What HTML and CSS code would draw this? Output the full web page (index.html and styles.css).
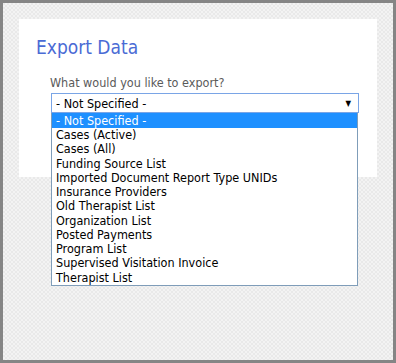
FILE: index.html
```html
<!DOCTYPE html>
<html lang="en">
<head>
    <meta charset="UTF-8">
    <meta name="viewport" content="width=device-width, initial-scale=1.0">
    <title>Export Data</title>
    <link rel="stylesheet" href="styles.css">
</head>
<body>
    <div class="frame">
        <div class="panel">
            <h1>Export Data</h1>
            <div class="field">
                <label>What would you like to export?</label>
                <div class="picker">
                    <div class="picker-box">
                        <span>- Not Specified -</span>
                        <span class="arrow">&#9660;</span>
                    </div>
                    <ul class="picker-list">
                        <li class="selected">- Not Specified -</li>
                        <li>Cases (Active)</li>
                        <li>Cases (All)</li>
                        <li>Funding Source List</li>
                        <li>Imported Document Report Type UNIDs</li>
                        <li>Insurance Providers</li>
                        <li>Old Therapist List</li>
                        <li>Organization List</li>
                        <li>Posted Payments</li>
                        <li>Program List</li>
                        <li>Supervised Visitation Invoice</li>
                        <li>Therapist List</li>
                    </ul>
                </div>
            </div>
        </div>
    </div>
</body>
</html>
```

FILE: styles.css
```css
body {
    margin: 0;
    font-family: "DejaVu Sans Condensed", "DejaVu Sans", sans-serif;
}
.frame {
    height: 363px;
    box-sizing: border-box;
    border: 3px solid #858585;
    padding: 16px 16px 0 16px;
    background-color: #efefef;
    background-image: repeating-conic-gradient(#f3f3f3 0 25%, #e9e9e9 0 50%);
    background-size: 4px 4px;
}
.panel {
    background-color: #fff;
    height: 158px;
    padding: 17px 17px 0 17px;
    box-sizing: border-box;
}
h1 {
    margin: 0;
    font-size: 19px;
    font-weight: normal;
    color: #4a6bd5;
    line-height: 22px;
}
.field {
    margin: 18px 0 0 15px;
}
label {
    display: block;
    font-size: 12.5px;
    color: #5a5a5a;
    line-height: 14px;
    margin: 0 0 3px -1px;
}
.picker {
    position: relative;
    width: 308px;
    font-size: 12.5px;
}
.picker-box {
    display: flex;
    justify-content: space-between;
    align-items: center;
    height: 20px;
    box-sizing: border-box;
    border: 1px solid #7aa5e6;
    padding: 0 7px 0 4px;
    color: #000;
}
.arrow {
    font-size: 8px;
}
.picker-list {
    position: absolute;
    top: 20px;
    left: 0;
    width: 307px;
    box-sizing: border-box;
    margin: 0;
    padding: 0;
    list-style: none;
    background-color: #fff;
    border: 1px solid #7f9db9;
    border-top: none;
}
.picker-list li {
    line-height: 14.25px;
    padding-left: 4px;
    color: #000;
}
.picker-list li.selected {
    background-color: #1e90ff;
    color: #fff;
    line-height: 15px;
}
```
